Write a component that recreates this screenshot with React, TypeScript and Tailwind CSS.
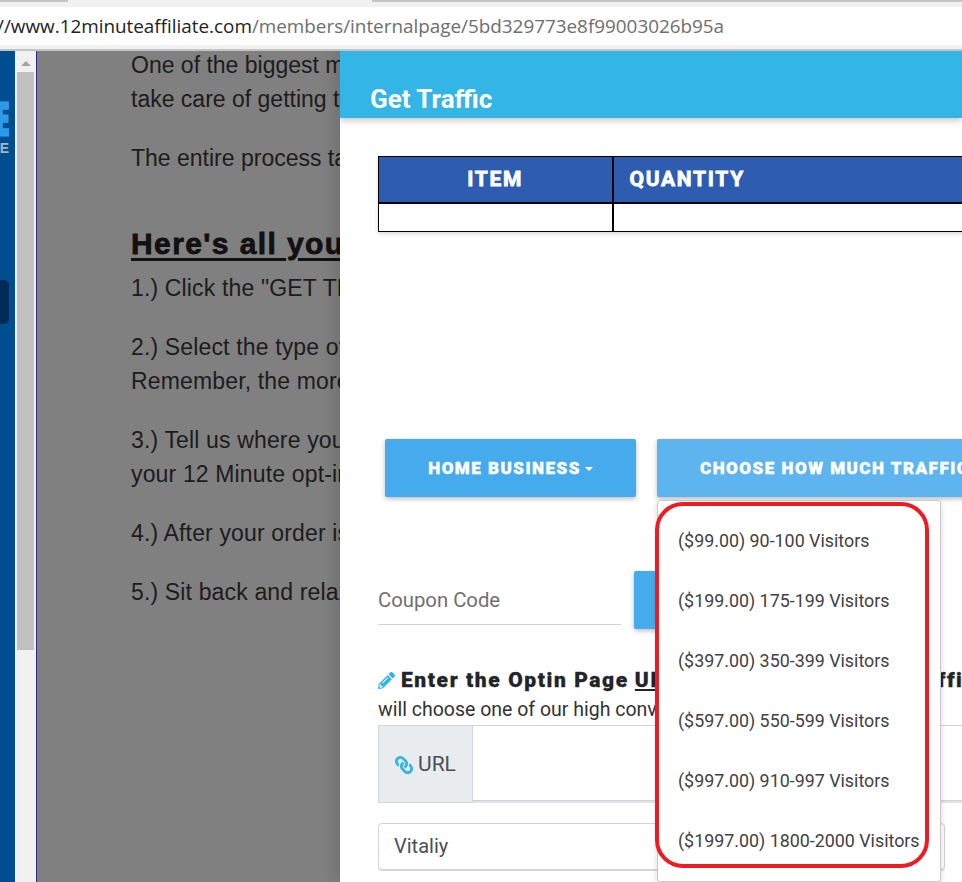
import React from 'react';
import { FaLink, FaPencilAlt } from 'react-icons/fa';

const traffic = [
  '($99.00) 90-100 Visitors',
  '($199.00) 175-199 Visitors',
  '($397.00) 350-399 Visitors',
  '($597.00) 550-599 Visitors',
  '($997.00) 910-997 Visitors',
  '($1997.00) 1800-2000 Visitors',
];

const BrowserBar = () => (
  <div className="shrink-0 bg-[#f1f1f1]">
    <div className="flex h-[2px]">
      <div className="w-[68px] bg-[#c4c4c4]" />
      <div className="w-[304px]" />
      <div className="flex-1 bg-[#c4c4c4]" />
    </div>
    <div className="mt-[5px] flex h-[38px] items-center overflow-hidden whitespace-nowrap bg-white pt-[1px] font-['Open_Sans',sans-serif] text-[18.87px] text-[#6e6e6e]">
      <span className="-ml-[3px] text-[#222]">//www.12minuteaffiliate.com</span>
      <span>/members/internalpage/5bd329773e8f99003026b95a</span>
    </div>
    <div className="mt-[4px] h-[2px] bg-[#c4c4c4]" />
  </div>
);

const Sidebar = () => (
  <div className="flex w-[15px] shrink-0 flex-col overflow-hidden bg-[#004e8f]">
    <div className="mt-[49px] flex h-[60px] w-[9px] flex-col items-end overflow-hidden font-['Liberation_Sans',sans-serif] font-bold leading-none">
      <span className="inline-block origin-right scale-x-[0.33] text-[47px] leading-[38px] text-[#2f9aec] [-webkit-text-stroke:3px_#2f9aec]">
        E
      </span>
      <span className="mt-[4px] text-[14px] leading-[12px] text-[#9fb6cc]">E</span>
    </div>
    <div className="mt-[120px] h-[44px] w-[9px] rounded-r-[5px] bg-[#012b57]" />
  </div>
);

const Scrollbar = () => (
  <div className="flex w-[21px] shrink-0 flex-col items-center bg-[#f1f1f1]">
    <div className="mt-[10px] h-0 w-0 border-x-[5px] border-b-[5px] border-x-transparent border-b-[#a3a3a3]" />
    <div className="mt-[6px] h-[578px] w-[17px] bg-[#c1c1c1]" />
  </div>
);

const PageText = () => (
  <div className="-mt-[3px] w-[900px] pl-[94px] font-['Liberation_Sans',sans-serif] text-[23px] leading-[34px] text-[#1c1c1c]">
    <p className="mb-[25px]">
      One of the biggest mistakes new affiliates make
      <br />
      take care of getting traffic for you
    </p>
    <p>The entire process takes just minutes</p>
    <h3 className="mb-[6px] mt-[48px] text-[30px] font-bold leading-[42px] tracking-[1.4px] text-[#111] underline decoration-[3px] underline-offset-[4px] [-webkit-text-stroke:0.8px_#111]">
      Here's all you need to do
    </h3>
    <div className="tracking-[0.15px]">
      <p className="mb-[25px]">1.) Click the "GET TRAFFIC" button</p>
      <p className="mb-[25px]">
        2.) Select the type of traffic you want
        <br />
        Remember, the more traffic the better
      </p>
      <p className="mb-[25px]">
        3.) Tell us where you want it sent
        <br />
        your 12 Minute opt-in page
      </p>
      <p className="mb-[25px]">4.) After your order is placed we get to work</p>
      <p>5.) Sit back and relax</p>
    </div>
  </div>
);

const TrafficMenu = () => (
  <div className="absolute left-0 top-[61px] h-[382px] w-[284px] rounded-[3px] border border-[#c9c9c9] bg-white font-['Roboto',sans-serif] text-[17.85px] font-normal normal-case tracking-normal text-[#424242] shadow-[0_2px_6px_rgba(0,0,0,0.15)]">
    <ul className="pt-[10px]">
      {traffic.map((row) => (
        <li key={row} className="flex h-[60px] items-center whitespace-nowrap pl-[20px]">
          {row}
        </li>
      ))}
    </ul>
    {/* red marker someone drew on the screenshot */}
    <div className="absolute -left-[3px] top-[1px] h-[366px] w-[274px] rounded-[28px] border-[4px] border-[#ed1c24]" />
  </div>
);

const TrafficModal = () => (
  <div className="absolute inset-y-0 left-[303px] right-0 overflow-hidden bg-white font-['Roboto',sans-serif] shadow-[-6px_0_14px_rgba(0,0,0,0.12)]">
    <div className="flex h-[67px] items-end bg-[#33b5e5] pb-[1px] pl-[30px] text-[26px] font-bold leading-[36px] text-white shadow-[0_3px_6px_rgba(0,0,0,0.2)]">
      Get Traffic
    </div>

    <table className="ml-[38px] mt-[38px] w-[700px] table-fixed border-collapse border border-black text-white shadow-[0_2px_4px_rgba(0,0,0,0.15)]">
      <thead>
        <tr className="h-[46px] bg-[#2d5cb0] text-[21px] font-black tracking-[1.7px] [-webkit-text-stroke:0.8px_white]">
          <th className="w-[234px] border-b-2 border-r-2 border-black pt-[1px] text-center">ITEM</th>
          <th className="border-b-2 border-black pl-[16px] pt-[1px] text-left">QUANTITY</th>
        </tr>
      </thead>
      <tbody>
        <tr className="h-[29px]">
          <td className="border-r-2 border-black" />
          <td />
        </tr>
      </tbody>
    </table>

    <div className="ml-[45px] mt-[207px] flex gap-[21px] text-[17px] font-black uppercase tracking-[1.5px] text-white">
      <div className="flex h-[58px] w-[251px] shrink-0 items-center justify-center rounded-[2px] bg-[#45abec] pt-[1px] shadow-[0_2px_5px_rgba(0,0,0,0.26)] [-webkit-text-stroke:0.4px_white]">
        Home Business
        <span className="ml-[4px] h-0 w-0 border-x-[4px] border-t-[4px] border-x-transparent border-t-white" />
      </div>
      <div className="relative h-[58px] w-[340px] shrink-0">
        <div className="flex h-full items-center whitespace-nowrap rounded-[2px] bg-[#5db4ee] pl-[43px] pt-[1px] shadow-[0_2px_5px_rgba(0,0,0,0.26)] [-webkit-text-stroke:0.4px_white]">
          Choose how much traffic
        </div>
        <TrafficMenu />
      </div>
    </div>

    <div className="ml-[38px] mt-[74px] flex gap-[13px]">
      <div className="mb-[4px] flex h-[54px] w-[243px] items-center border-b border-[#ced4da] pt-[5px] text-[20.3px] text-[#6f6f6f]">
        Coupon Code
      </div>
      <div className="h-[58px] w-[200px] rounded-[2px] bg-[#45abec] shadow-[0_2px_5px_rgba(0,0,0,0.26)]" />
    </div>

    <div className="ml-[38px] mt-[37px] flex h-[28px] items-center whitespace-nowrap pt-[1px] text-[21px] font-black tracking-[1.6px] text-[#212529] [-webkit-text-stroke:0.3px_#212529]">
      <FaPencilAlt className="mr-[6px] h-[17px] w-[17px] shrink-0 text-[#33b5e5]" />
      Enter the Optin Page <span className="ml-[6px] underline">URL</span>
      <span className="-ml-[20px]">you want to send your traffic</span>
    </div>
    <p className="ml-[38px] whitespace-nowrap text-[19.5px] leading-[31px] text-[#333]">
      will choose one of our high converting pages
    </p>

    <div className="ml-[38px] flex h-[78px] w-[700px]">
      <div className="flex w-[95px] items-center justify-center gap-[5px] border border-[#ced4da] bg-[#e9ecef] pt-[2px] text-[21px] text-[#495057]">
        <FaLink className="h-[18px] w-[18px] -scale-x-100 text-[#33b5e5]" />
        URL
      </div>
      <div className="mb-[2px] flex-1 border-y border-[#ced4da] bg-white shadow-[0_2px_0_#e4e4e4]" />
    </div>

    <div className="ml-[38px] mt-[20px] flex h-[47px] w-[567px] items-center rounded-[4px] border border-[#ced4da] pb-[2px] pl-[15px] text-[20px] text-[#495057] shadow-[0_1px_0_#d5d5d5]">
      Vitaliy
    </div>
  </div>
);

export default function App() {
  return (
    <div className="flex h-[882px] w-[962px] flex-col overflow-hidden bg-white">
      <BrowserBar />
      <div className="flex min-h-0 flex-1">
        <Sidebar />
        <Scrollbar />
        <div className="relative min-w-0 flex-1 overflow-hidden border-l border-[#2a2a90] bg-[#808080]">
          <PageText />
          <TrafficModal />
        </div>
      </div>
    </div>
  );
}
